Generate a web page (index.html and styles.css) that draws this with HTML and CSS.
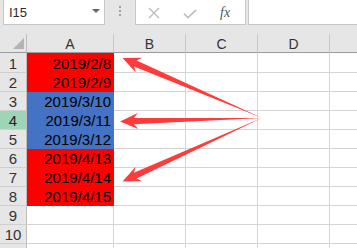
FILE: index.html
```html
<!DOCTYPE html>
<html>
<head>
<meta charset="utf-8">
<link rel="stylesheet" href="styles.css">
</head>
<body>
<div class="app">
  <div class="toolbar">
    <div class="namebox"><span class="ref">I15</span><span class="caret"></span></div>
    <div class="sep"><i></i><i></i><i></i></div>
    <div class="btns">
      <svg class="ico-x" width="12" height="12" viewBox="0 0 12 12"><path d="M1 1L11 11M11 1L1 11" stroke="#bdbdbd" stroke-width="1.4" fill="none"/></svg>
      <svg class="ico-check" width="14" height="10" viewBox="0 0 14 10"><path d="M1 4.6L5 8.6L13.2 0.8" stroke="#bdbdbd" stroke-width="1.6" fill="none"/></svg>
      <span class="fx">fx</span>
    </div>
    <div class="formula"></div>
  </div>
  <div class="strip"></div>
  <div class="sheet">
    <div class="corner"><svg width="26" height="18" viewBox="0 0 26 18"><polygon points="13,15 24,15 24,4" fill="#b4b4b4"/></svg></div>
    <div class="ch">A</div><div class="ch">B</div><div class="ch">C</div><div class="ch">D</div><div class="ch"></div>

    <div class="rh">1</div><div class="cell v red">2019/2/8</div><div class="cell"></div><div class="cell"></div><div class="cell"></div><div class="cell"></div>
    <div class="rh">2</div><div class="cell v red">2019/2/9</div><div class="cell"></div><div class="cell"></div><div class="cell"></div><div class="cell"></div>
    <div class="rh">3</div><div class="cell v blue">2019/3/10</div><div class="cell"></div><div class="cell"></div><div class="cell"></div><div class="cell"></div>
    <div class="rh sel">4</div><div class="cell v blue">2019/3/11</div><div class="cell"></div><div class="cell"></div><div class="cell"></div><div class="cell"></div>
    <div class="rh">5</div><div class="cell v blue">2019/3/12</div><div class="cell"></div><div class="cell"></div><div class="cell"></div><div class="cell"></div>
    <div class="rh">6</div><div class="cell v red">2019/4/13</div><div class="cell"></div><div class="cell"></div><div class="cell"></div><div class="cell"></div>
    <div class="rh">7</div><div class="cell v red">2019/4/14</div><div class="cell"></div><div class="cell"></div><div class="cell"></div><div class="cell"></div>
    <div class="rh">8</div><div class="cell v red">2019/4/15</div><div class="cell"></div><div class="cell"></div><div class="cell"></div><div class="cell"></div>
    <div class="rh">9</div><div class="cell"></div><div class="cell"></div><div class="cell"></div><div class="cell"></div><div class="cell"></div>
    <div class="rh">10</div><div class="cell"></div><div class="cell"></div><div class="cell"></div><div class="cell"></div><div class="cell"></div>
    <div class="rh"></div><div class="cell"></div><div class="cell"></div><div class="cell"></div><div class="cell"></div><div class="cell"></div>
  </div>
  <svg class="arrows" width="357" height="248" viewBox="0 0 357 248">
    <polygon points="0,0 18,-8 14,-3.2 152,0 14,3.2 18,8" transform="translate(122.5,58) rotate(23.27)"/>
    <polygon points="0,0 18,-8 14,-3.2 142,0 14,3.2 18,8" transform="translate(120,121.5) rotate(-1.4)"/>
    <polygon points="0,0 18,-8 14,-3.2 153,0 14,3.2 18,8" transform="translate(122.5,181.5) rotate(-24.48)"/>
  </svg>
</div>
</body>
</html>
```
FILE: styles.css
```css
body {
  margin: 0;
  background: #e6e6e6;
  font-family: "Liberation Sans", Arial, sans-serif;
}
.app {
  position: relative;
  width: 357px;
  height: 248px;
  overflow: hidden;
  background: #e6e6e6;
}
.toolbar {
  display: flex;
  align-items: flex-start;
  height: 25px;
}
.namebox {
  box-sizing: border-box;
  margin-left: 3px;
  margin-top: -1px;
  width: 102px;
  height: 26px;
  border: 1px solid #c6c6c6;
  background: #fff;
  display: flex;
  align-items: center;
  justify-content: space-between;
  padding: 1px 4px 0 5px;
}
.ref {
  font-size: 13px;
  line-height: 23px;
  color: #2a2a2a;
}
.caret {
  width: 0;
  height: 0;
  border-left: 4px solid transparent;
  border-right: 4px solid transparent;
  border-top: 4px solid #666;
  margin-top: -3px;
}
.sep {
  box-sizing: border-box;
  width: 30px;
  height: 25px;
  display: flex;
  flex-direction: column;
  gap: 2px;
  padding: 6px 0 0 14px;
}
.sep i {
  display: block;
  width: 2px;
  height: 2px;
  background: #a0a0a0;
}
.btns {
  box-sizing: border-box;
  margin-top: -1px;
  width: 111px;
  height: 26px;
  border: 1px solid #c6c6c6;
  background: #fff;
  display: flex;
  align-items: flex-start;
  padding-left: 12px;
  padding-top: 1px;
}
.ico-x {
  display: block;
  margin-top: 6px;
}
.ico-check {
  display: block;
  margin-left: 23px;
  margin-top: 8px;
}
.fx {
  margin-left: 23px;
  font-family: "Liberation Serif", "Times New Roman", serif;
  font-style: italic;
  font-size: 14px;
  line-height: 23px;
  color: #555;
}
.formula {
  box-sizing: border-box;
  flex: 1;
  margin-left: 2px;
  margin-top: -1px;
  height: 26px;
  border: 1px solid #c6c6c6;
  border-right: none;
  background: #fff;
}
.strip {
  height: 9px;
}
.sheet {
  display: grid;
  grid-template-columns: 27px 87px 72px 72px 72px 72px;
  grid-template-rows: 19px 20px repeat(10, 19px);
}
.sheet > div {
  box-sizing: border-box;
}
.corner {
  background: #e6e6e6;
  border-right: 1px solid #bdbdbd;
  border-bottom: 1px solid #9b9b9b;
}
.corner svg {
  display: block;
}
.ch {
  background: #e6e6e6;
  border-right: 1px solid #c8c8c8;
  border-bottom: 1px solid #9b9b9b;
  text-align: center;
  font-size: 14px;
  line-height: 15px;
  padding-top: 3px;
  color: #333;
}
.rh {
  background: #e6e6e6;
  border-right: 1px solid #bdbdbd;
  border-bottom: 1px solid #cfcfcf;
  display: flex;
  align-items: flex-end;
  justify-content: center;
  font-size: 15px;
  line-height: 16px;
  color: #333;
}
.rh.sel {
  background: #9fd5b7;
  color: #222;
}
.cell {
  background: #fff;
  border-right: 1px solid #d4d4d4;
  border-bottom: 1px solid #d4d4d4;
}
.cell.v {
  display: flex;
  align-items: flex-end;
  justify-content: flex-end;
  padding-right: 2px;
  font-size: 15px;
  line-height: 16px;
  color: #000;
}
.red {
  background: #ff0000;
  border-color: #ff0000;
}
.blue {
  background: #4472c4;
  border-color: #4472c4;
}
.arrows {
  position: absolute;
  left: 0;
  top: 0;
  pointer-events: none;
  fill: #ff3b3b;
}
```
